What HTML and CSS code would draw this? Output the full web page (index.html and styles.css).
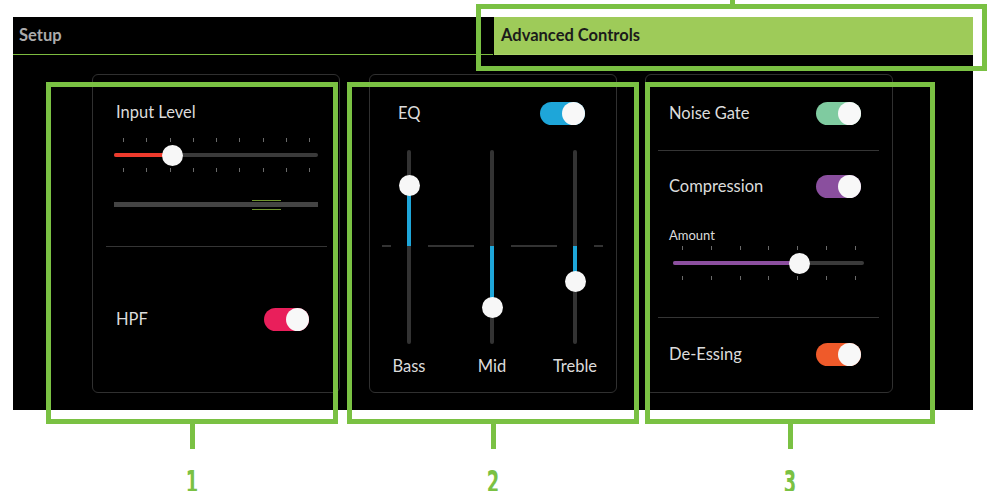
FILE: index.html
```html
<!DOCTYPE html>
<html lang="en">
<head>
<meta charset="utf-8">
<title>Advanced Controls</title>
<link rel="stylesheet" href="styles.css">
</head>
<body>
<div class="page">
  <div class="app">
    <div class="tabs">
      <div class="tab tab-setup">Setup</div>
      <div class="tab tab-adv">Advanced Controls</div>
    </div>
    <div class="panels">
      <section class="panel panel-input">
        <div class="label label-top">Input Level</div>
        <div class="hslider hslider-input">
          <div class="ticks ticks-top"><i></i><i></i><i></i><i></i><i></i><i></i><i></i><i></i><i></i></div>
          <div class="rail"><div class="fill fill-red" style="width:58px"></div></div>
          <div class="knob" style="left:58px"></div>
          <div class="ticks ticks-bottom"><i></i><i></i><i></i><i></i><i></i><i></i><i></i><i></i><i></i></div>
        </div>
        <div class="range">
          <div class="range-rail"></div>
          <div class="range-mark" style="left:138px;width:29px"></div>
        </div>
        <div class="divider divider-input"></div>
        <div class="row row-hpf"><span class="label">HPF</span><span class="toggle toggle-pink"></span></div>
      </section>

      <section class="panel panel-eq">
        <div class="row row-eq"><span class="label">EQ</span><span class="toggle toggle-blue"></span></div>
        <div class="eq">
          <div class="eq-zero"></div>
          <div class="band">
            <div class="vtrack">
              <span class="vmask"></span><span class="vrail"></span>
              <span class="vfill" style="top:35px;height:61px"></span>
              <span class="vknob" style="top:35px"></span>
            </div>
            <div class="band-label">Bass</div>
          </div>
          <div class="band">
            <div class="vtrack">
              <span class="vmask"></span><span class="vrail"></span>
              <span class="vfill" style="top:96px;height:61px"></span>
              <span class="vknob" style="top:157px"></span>
            </div>
            <div class="band-label">Mid</div>
          </div>
          <div class="band">
            <div class="vtrack">
              <span class="vmask"></span><span class="vrail"></span>
              <span class="vfill" style="top:96px;height:35px"></span>
              <span class="vknob" style="top:131px"></span>
            </div>
            <div class="band-label">Treble</div>
          </div>
        </div>
      </section>

      <section class="panel panel-dyn">
        <div class="row row-gate"><span class="label">Noise Gate</span><span class="toggle toggle-green"></span></div>
        <div class="divider divider-dyn divider-gate"></div>
        <div class="row row-comp"><span class="label">Compression</span><span class="toggle toggle-purple"></span></div>
        <div class="amount-label">Amount</div>
        <div class="hslider hslider-amount">
          <div class="ticks ticks-top"><i></i><i></i><i></i><i></i><i></i><i></i><i></i></div>
          <div class="rail"><div class="fill fill-purple" style="width:126px"></div></div>
          <div class="knob" style="left:126px"></div>
          <div class="ticks ticks-bottom"><i></i><i></i><i></i><i></i><i></i><i></i><i></i></div>
        </div>
        <div class="divider divider-dyn divider-comp"></div>
        <div class="row row-ess"><span class="label">De-Essing</span><span class="toggle toggle-orange"></span></div>
      </section>
    </div>
  </div>

  <div class="callout-tab"></div>
  <div class="callout-tab-stem"></div>
  <div class="callout callout-1"><div class="frame"></div><div class="stem"></div><div class="num">1</div></div>
  <div class="callout callout-2"><div class="frame"></div><div class="stem"></div><div class="num">2</div></div>
  <div class="callout callout-3"><div class="frame"></div><div class="stem"></div><div class="num">3</div></div>
</div>
</body>
</html>
```

FILE: styles.css
```css
* { box-sizing: border-box; }
html, body { margin: 0; padding: 0; background: #fff; }
body { width: 989px; height: 491px; overflow: hidden; font-family: "Lato", "Noto Sans", sans-serif; }

.page { position: relative; width: 989px; height: 491px; padding-top: 17px; padding-left: 13px; }

.app { width: 960px; height: 393px; background: #000; }

.tabs { display: flex; height: 38px; gap: 1px; }
.tab { font-weight: 700; font-size: 16.5px; line-height: 36px; }
.tab-setup { width: 480px; padding-left: 6px; color: #ababab; border-bottom: 1px solid #7dbb3f; }
.tab-adv { flex: 1; padding-left: 7px; color: #1b1b1b; background: #9ecb59; border-bottom: 1px solid #a9d468; }

.panels { display: flex; gap: 28px; padding: 19px 0 0 79px; }
.panel { width: 248px; height: 319px; border: 1px solid #303030; border-radius: 6px; display: flex; flex-direction: column; }
.panel-eq { margin-left: 1px; }

.label { color: #dcdcdc; font-size: 16.5px; line-height: 20px; }
.label-top { margin-top: 27px; padding-left: 23px; }

.hslider { position: relative; height: 40px; }
.hslider-input { margin: 13px 0 0 21px; width: 204px; }
.hslider-amount { margin-left: 27px; width: 191px; }
.ticks { position: absolute; left: 0; right: 0; height: 4px; display: flex; justify-content: space-between; padding: 0 8px 0 9px; }
.ticks i { display: block; width: 1px; height: 4px; background: #6a6a6a; }
.ticks-top { top: 3px; }
.ticks-bottom { top: 33px; }
.rail { position: absolute; left: 0; right: 0; top: 18px; height: 4px; background: #3a3a3a; border-radius: 2px; overflow: hidden; }
.fill { height: 100%; }
.fill-red { background: #ee3a2c; }
.fill-purple { background: #8c4f9f; }
.knob { position: absolute; top: 10px; width: 21px; height: 21px; margin-left: -10.5px; border-radius: 50%; background: #f7f7f7; }

.range { position: relative; height: 14px; margin: 22px 0 0 21px; width: 204px; }
.range-rail { position: absolute; left: 0; right: 0; top: 5px; height: 5px; background: #444; }
.range-mark { position: absolute; top: 3px; height: 10px; border-top: 1px solid #6f9330; border-bottom: 1px solid #6f9330; }

.divider { height: 1px; background: #353535; }
.divider-input { margin: 35px 12px 0 13px; }
.divider-dyn { margin: 0 13px 0 12px; }
.divider-gate { margin-top: 25px; }
.divider-comp { margin-top: 34px; }

.row { display: flex; align-items: center; justify-content: space-between; height: 23px; padding: 0 31px 0 23px; }
.row .label { margin-top: -2px; }
.row-hpf { margin-top: 61px; padding-right: 30px; }
.row-eq { margin-top: 27px; padding-left: 28px; }
.row-gate { margin-top: 27px; }
.row-comp { margin-top: 24px; }
.row-ess { margin-top: 25px; }

.toggle { position: relative; width: 45px; height: 23px; border-radius: 12px; }
.toggle::after { content: ""; position: absolute; right: 0; top: 0; width: 23px; height: 23px; border-radius: 50%; background: #f8f8f8; }
.toggle-pink { background: #e91f5b; }
.toggle-blue { background: #1ea6d9; }
.toggle-green { background: #7fcba0; }
.toggle-purple { background: #8a4f9e; }
.toggle-orange { background: #ef5a2a; }

.amount-label { margin-top: 30px; padding-left: 23px; color: #dcdcdc; font-size: 13px; line-height: 15px; }

.eq { position: relative; display: grid; grid-template-columns: repeat(3, 76px); column-gap: 7px; margin: 25px 0 0 1px; }
.eq-zero { position: absolute; left: 11px; width: 221px; top: 95px; height: 2px; background: #333; }
.band { display: flex; flex-direction: column; align-items: center; }
.vtrack { position: relative; width: 37px; height: 194px; }
.vmask { position: absolute; left: 0; right: 0; top: 94px; height: 4px; background: #000; }
.vrail { position: absolute; left: 50%; margin-left: -2px; width: 4px; top: 0; bottom: 0; background: #333; border-radius: 2px; }
.vfill { position: absolute; left: 50%; margin-left: -2px; width: 4px; background: #1ea6d9; }
.vknob { position: absolute; left: 50%; width: 21px; height: 21px; margin: -10.5px 0 0 -10.5px; border-radius: 50%; background: #f7f7f7; }
.band-label { margin-top: 12px; color: #dcdcdc; font-size: 16.5px; line-height: 20px; }

.callout-tab { position: absolute; left: 476px; top: 4px; width: 511px; height: 67px; border: 5px solid #7ac143; }
.callout-tab-stem { position: absolute; left: 730px; top: 0; width: 5px; height: 4px; background: #7ac143; }
.callout { position: absolute; top: 82px; display: flex; flex-direction: column; align-items: center; }
.callout-1 { left: 46px; width: 292px; }
.callout-2 { left: 347px; width: 292px; }
.callout-3 { left: 645px; width: 290px; }
.frame { align-self: stretch; height: 342px; border: 5px solid #7ac143; }
.stem { width: 5px; height: 25px; background: #7ac143; }
.num { margin-top: 17px; color: #7ac143; font-family: "DejaVu Sans Condensed", "DejaVu Sans", sans-serif; font-weight: 700; font-size: 32px; line-height: 32px; transform: scaleX(0.62); }
```
